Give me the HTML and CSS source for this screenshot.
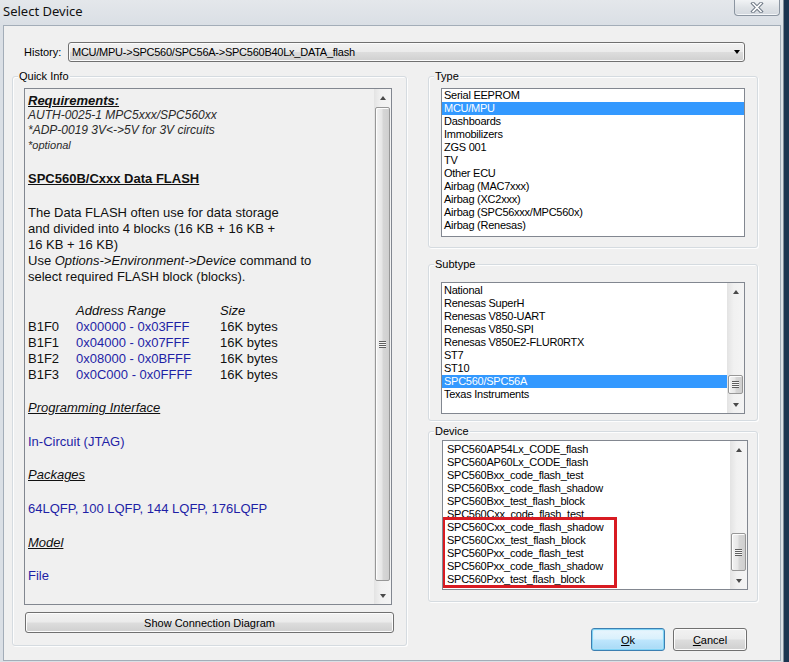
FILE: index.html
```html
<!DOCTYPE html>
<html>
<head>
<meta charset="utf-8">
<title>Select Device</title>
<link rel="stylesheet" href="styles.css">
</head>
<body>
<div class="frame">
  <div class="titlebar">
    <span class="title">Select Device</span>
    <div class="close-btn">
      <svg width="14" height="11" viewBox="0 0 14 11">
        <path d="M3 1.5 L11 9.5 M11 1.5 L3 9.5" stroke="#6f7986" stroke-width="3.6" stroke-linecap="square" fill="none"/>
        <path d="M3 1.5 L11 9.5 M11 1.5 L3 9.5" stroke="#ffffff" stroke-width="1.6" stroke-linecap="square" fill="none"/>
      </svg>
    </div>
  </div>
  <div class="client">
    <div class="history-row">
      <span class="history-label">History:</span>
      <div class="combo">
        <span class="combo-text">MCU/MPU-&gt;SPC560/SPC56A-&gt;SPC560B40Lx_DATA_flash</span>
        <span class="tri-down"></span>
      </div>
    </div>
    <div class="main">
      <div class="group quick">
        <span class="group-label">Quick Info</span>
        <div class="info-box">
          <div class="info-text">
            <div class="req-title">Requirements:</div>
            <div class="req-line">AUTH-0025-1 MPC5xxx/SPC560xx</div>
            <div class="req-line">*ADP-0019 3V&lt;-&gt;5V for 3V circuits</div>
            <div class="req-note">*optional</div>
            <div class="heading">SPC560B/Cxxx Data FLASH</div>
            <p class="para">The Data FLASH often use for data storage<br>and divided into 4 blocks (16 KB + 16 KB +<br>16 KB + 16 KB)<br>Use <i>Options-&gt;Environment-&gt;Device</i> command to<br>select required FLASH block (blocks).</p>
            <div class="blocks">
              <span></span><span class="hdr">Address Range</span><span class="hdr">Size</span>
              <span>B1F0</span><span class="addr">0x00000 - 0x03FFF</span><span>16K bytes</span>
              <span>B1F1</span><span class="addr">0x04000 - 0x07FFF</span><span>16K bytes</span>
              <span>B1F2</span><span class="addr">0x08000 - 0x0BFFF</span><span>16K bytes</span>
              <span>B1F3</span><span class="addr">0x0C000 - 0x0FFFF</span><span>16K bytes</span>
            </div>
            <div class="section">Programming Interface</div>
            <div class="value">In-Circuit (JTAG)</div>
            <div class="section">Packages</div>
            <div class="value">64LQFP, 100 LQFP, 144 LQFP, 176LQFP</div>
            <div class="section">Model</div>
            <div class="value">File</div>
          </div>
          <div class="vscroll">
            <div class="sb-btn"><span class="tri-up"></span></div>
            <div class="sb-track">
              <div class="sb-thumb" style="margin-top:1px;height:474px"><span class="grip"></span></div>
            </div>
            <div class="sb-btn"><span class="tri-down small"></span></div>
          </div>
        </div>
        <button class="btn wide">Show Connection Diagram</button>
      </div>

      <div class="right-col">
        <div class="group type">
          <span class="group-label">Type</span>
          <div class="listbox type-list">
            <div class="items">
              <div class="item">Serial EEPROM</div>
              <div class="item sel">MCU/MPU</div>
              <div class="item">Dashboards</div>
              <div class="item">Immobilizers</div>
              <div class="item">ZGS 001</div>
              <div class="item">TV</div>
              <div class="item">Other ECU</div>
              <div class="item">Airbag (MAC7xxx)</div>
              <div class="item">Airbag (XC2xxx)</div>
              <div class="item">Airbag (SPC56xxx/MPC560x)</div>
              <div class="item">Airbag (Renesas)</div>
            </div>
          </div>
        </div>

        <div class="group subtype">
          <span class="group-label">Subtype</span>
          <div class="listbox subtype-list">
            <div class="items">
              <div class="item">National</div>
              <div class="item">Renesas SuperH</div>
              <div class="item">Renesas V850-UART</div>
              <div class="item">Renesas V850-SPI</div>
              <div class="item">Renesas V850E2-FLUR0RTX</div>
              <div class="item">ST7</div>
              <div class="item">ST10</div>
              <div class="item sel">SPC560/SPC56A</div>
              <div class="item">Texas Instruments</div>
            </div>
            <div class="vscroll">
              <div class="sb-btn"><span class="tri-up"></span></div>
              <div class="sb-track">
                <div class="sb-thumb" style="margin-top:75px;height:19px"><span class="grip"></span></div>
              </div>
              <div class="sb-btn"><span class="tri-down small"></span></div>
            </div>
          </div>
        </div>

        <div class="group device">
          <span class="group-label">Device</span>
          <div class="listbox device-list">
            <div class="items">
              <div class="item">SPC560AP54Lx_CODE_flash</div>
              <div class="item">SPC560AP60Lx_CODE_flash</div>
              <div class="item">SPC560Bxx_code_flash_test</div>
              <div class="item">SPC560Bxx_code_flash_shadow</div>
              <div class="item">SPC560Bxx_test_flash_block</div>
              <div class="item">SPC560Cxx_code_flash_test</div>
              <div class="item">SPC560Cxx_code_flash_shadow</div>
              <div class="item">SPC560Cxx_test_flash_block</div>
              <div class="item">SPC560Pxx_code_flash_test</div>
              <div class="item">SPC560Pxx_code_flash_shadow</div>
              <div class="item">SPC560Pxx_test_flash_block</div>
            </div>
            <div class="vscroll">
              <div class="sb-btn"><span class="tri-up"></span></div>
              <div class="sb-track">
                <div class="sb-thumb" style="margin-top:75px;height:38px"><span class="grip"></span></div>
              </div>
              <div class="sb-btn"><span class="tri-down small"></span></div>
            </div>
            <div class="red-mark"></div>
          </div>
        </div>

        <div class="buttons">
          <button class="btn default"><u>O</u>k</button>
          <button class="btn"><u>C</u>ancel</button>
        </div>
      </div>
    </div>
  </div>
</div>
</body>
</html>
```

FILE: styles.css
```css
* { box-sizing: border-box; }

html, body {
  margin: 0;
  padding: 0;
}

body {
  width: 789px;
  height: 662px;
  overflow: hidden;
  background: #1b3450;
  font-family: "Liberation Sans", Arial, sans-serif;
  font-size: 11px;
  color: #000;
}

.frame {
  width: 784px;
  height: 662px;
  display: flex;
  flex-direction: column;
  background: linear-gradient(#e4e7eb, #dadfe5 25px, #dadfe5);
  border-right: 1px solid #7f8b98;
}

/* title bar */
.titlebar {
  height: 25px;
  display: flex;
  align-items: flex-start;
  flex-shrink: 0;
}

.title {
  padding: 2px 0 0 3px;
  font-family: "Noto Sans", "Open Sans", sans-serif;
  font-size: 13px;
  line-height: 18px;
  color: #111;
}

.close-btn {
  margin-left: auto;
  margin-right: 3px;
  width: 46px;
  height: 16px;
  border: 1px solid #8b95a1;
  border-top: none;
  border-radius: 0 0 4px 4px;
  background: linear-gradient(#f1f3f5, #dfe3e7 50%, #d3d8de);
  box-shadow: inset 0 -1px 0 #f4f6f8;
  display: flex;
  align-items: center;
  justify-content: center;
}

.close-btn svg { display: block; }

/* client area */
.client {
  flex: 1;
  margin: 0 2px 1px 3px;
  border: 1px solid #a3adb8;
  background: #f0f0f0;
}

.history-row {
  display: flex;
  align-items: center;
  height: 20px;
  margin-top: 16px;
  padding-left: 20px;
}

.history-label {
  width: 44px;
  line-height: 13px;
}

.combo {
  width: 677px;
  height: 20px;
  border: 1px solid #707070;
  border-radius: 3px;
  background: linear-gradient(#f2f2f2 0%, #ebebeb 48%, #dddddd 52%, #cfcfcf 100%);
  box-shadow: inset 0 0 0 1px #fbfbfb;
  display: flex;
  align-items: center;
  padding: 0 4px 0 3px;
}

.combo-text {
  flex: 1;
  letter-spacing: -0.25px;
  white-space: nowrap;
}

.tri-down {
  width: 0;
  height: 0;
  border-left: 3.5px solid transparent;
  border-right: 3.5px solid transparent;
  border-top: 4px solid #000;
}

.tri-down.small {
  border-top-color: #4a4a4a;
}

.tri-up {
  width: 0;
  height: 0;
  border-left: 3.5px solid transparent;
  border-right: 3.5px solid transparent;
  border-bottom: 4px solid #4a4a4a;
}

/* main area */
.main {
  display: flex;
  align-items: flex-start;
  margin-top: 14px;
  padding-left: 8px;
}

.group {
  position: relative;
  border: 1px solid #d5dbe0;
  border-radius: 3px;
  box-shadow: inset 1px 1px 0 #fdfdfd, 1px 1px 0 #fdfdfd;
}

.group-label {
  position: absolute;
  top: -7px;
  left: 5px;
  padding: 0 1px;
  line-height: 13px;
  background: #f0f0f0;
  white-space: nowrap;
}

.quick {
  width: 395px;
  height: 570px;
  padding: 11px 0 0 11px;
}

.info-box {
  width: 368px;
  height: 517px;
  border: 1px solid #828790;
  background: #f0f0f0;
  display: flex;
}

.info-text {
  flex: 1;
  padding: 4px 0 0 3px;
  font-size: 13px;
  color: #111;
}

.req-title {
  line-height: 15px;
  font-weight: bold;
  font-style: italic;
  text-decoration: underline;
}

.req-line {
  line-height: 15px;
  font-size: 12px;
  font-style: italic;
  color: #2a2a2a;
}

.req-note {
  line-height: 15px;
  font-size: 11px;
  font-style: italic;
  color: #2a2a2a;
}

.heading {
  margin-top: 18px;
  line-height: 16px;
  font-weight: bold;
  text-decoration: underline;
}

.para {
  margin: 18px 0 0 0;
  line-height: 16px;
}

.blocks {
  margin-top: 17.6px;
  display: grid;
  grid-template-columns: 48px 144px auto;
  line-height: 16px;
}

.blocks .hdr { font-style: italic; }
.blocks .addr { color: #1f1fa6; }

.section {
  margin-top: 17.6px;
  line-height: 16px;
  font-style: italic;
  text-decoration: underline;
}

.value {
  margin-top: 17.6px;
  line-height: 16px;
  color: #1f1fa6;
}

/* scrollbar */
.vscroll {
  width: 17px;
  flex-shrink: 0;
  display: flex;
  flex-direction: column;
  background: linear-gradient(90deg, #e3e3e3, #f1f1f1 40%, #f4f4f4);
}

.sb-btn {
  height: 17px;
  flex-shrink: 0;
  display: flex;
  align-items: center;
  justify-content: center;
}

.sb-track {
  flex: 1;
  display: flex;
  flex-direction: column;
}

.sb-thumb {
  margin-left: 1px;
  width: 15px;
  border: 1px solid #979797;
  border-radius: 2px;
  background: linear-gradient(90deg, #f3f3f3, #e6e6e6 45%, #d6d6d6 55%, #cfcfcf);
  box-shadow: inset 1px 1px 0 #fdfdfd;
  display: flex;
  align-items: center;
  justify-content: center;
}

.grip {
  width: 7px;
  height: 7px;
  background: repeating-linear-gradient(#5f5f5f 0 1px, #f6f6f6 1px 2px);
}

/* right column */
.right-col {
  margin-left: 21px;
  width: 330px;
  display: flex;
  flex-direction: column;
}

.type {
  height: 172px;
  padding: 11px 0 0 12px;
}

.subtype {
  margin-top: 16px;
  height: 157px;
  padding: 17px 0 0 12px;
}

.device {
  margin-top: 10px;
  height: 171px;
  padding: 8px 0 0 13px;
}

.listbox {
  position: relative;
  border: 1px solid #828790;
  background: #fff;
  display: flex;
  overflow: hidden;
}

.type-list { width: 304px; height: 149px; }
.subtype-list { width: 304px; height: 132px; }
.device-list { width: 306px; height: 150px; }

.items {
  flex: 1;
  letter-spacing: -0.25px;
}

.subtype-list .items { padding-top: 1px; }
.device-list .items { padding-top: 2px; }

.item {
  height: 13px;
  line-height: 13px;
  padding-left: 2px;
  white-space: nowrap;
}

.device-list .item { padding-left: 4px; }

.item.sel {
  background: #3399ff;
  color: #fff;
}

.red-mark {
  position: absolute;
  left: -1px;
  top: 76px;
  width: 175px;
  height: 71px;
  border: 3px solid #d81b22;
}

/* buttons */
.btn {
  font-family: "Liberation Sans", Arial, sans-serif;
  font-size: 11px;
  color: #000;
  height: 23px;
  padding: 0;
  border: 1px solid #707070;
  border-radius: 3px;
  background: linear-gradient(#f2f2f2 0%, #ebebeb 48%, #dddddd 52%, #cfcfcf 100%);
  box-shadow: inset 0 0 0 1px #fcfcfc;
}

.btn.wide {
  display: block;
  margin: 7px 0 0 1px;
  width: 369px;
  height: 21px;
}

.buttons {
  margin-top: 26px;
  display: flex;
  justify-content: flex-end;
  gap: 8px;
  padding-right: 11px;
}

.buttons .btn { width: 74px; }

.btn.default {
  border-color: #3c7fb1;
  background: linear-gradient(#eaf6fd 0%, #d9f0fc 48%, #bee6fd 52%, #a7d9f5 100%);
  box-shadow: inset 0 0 0 1px #7fd2f5, inset 0 0 2px 1px #b9ecfc;
}
```
